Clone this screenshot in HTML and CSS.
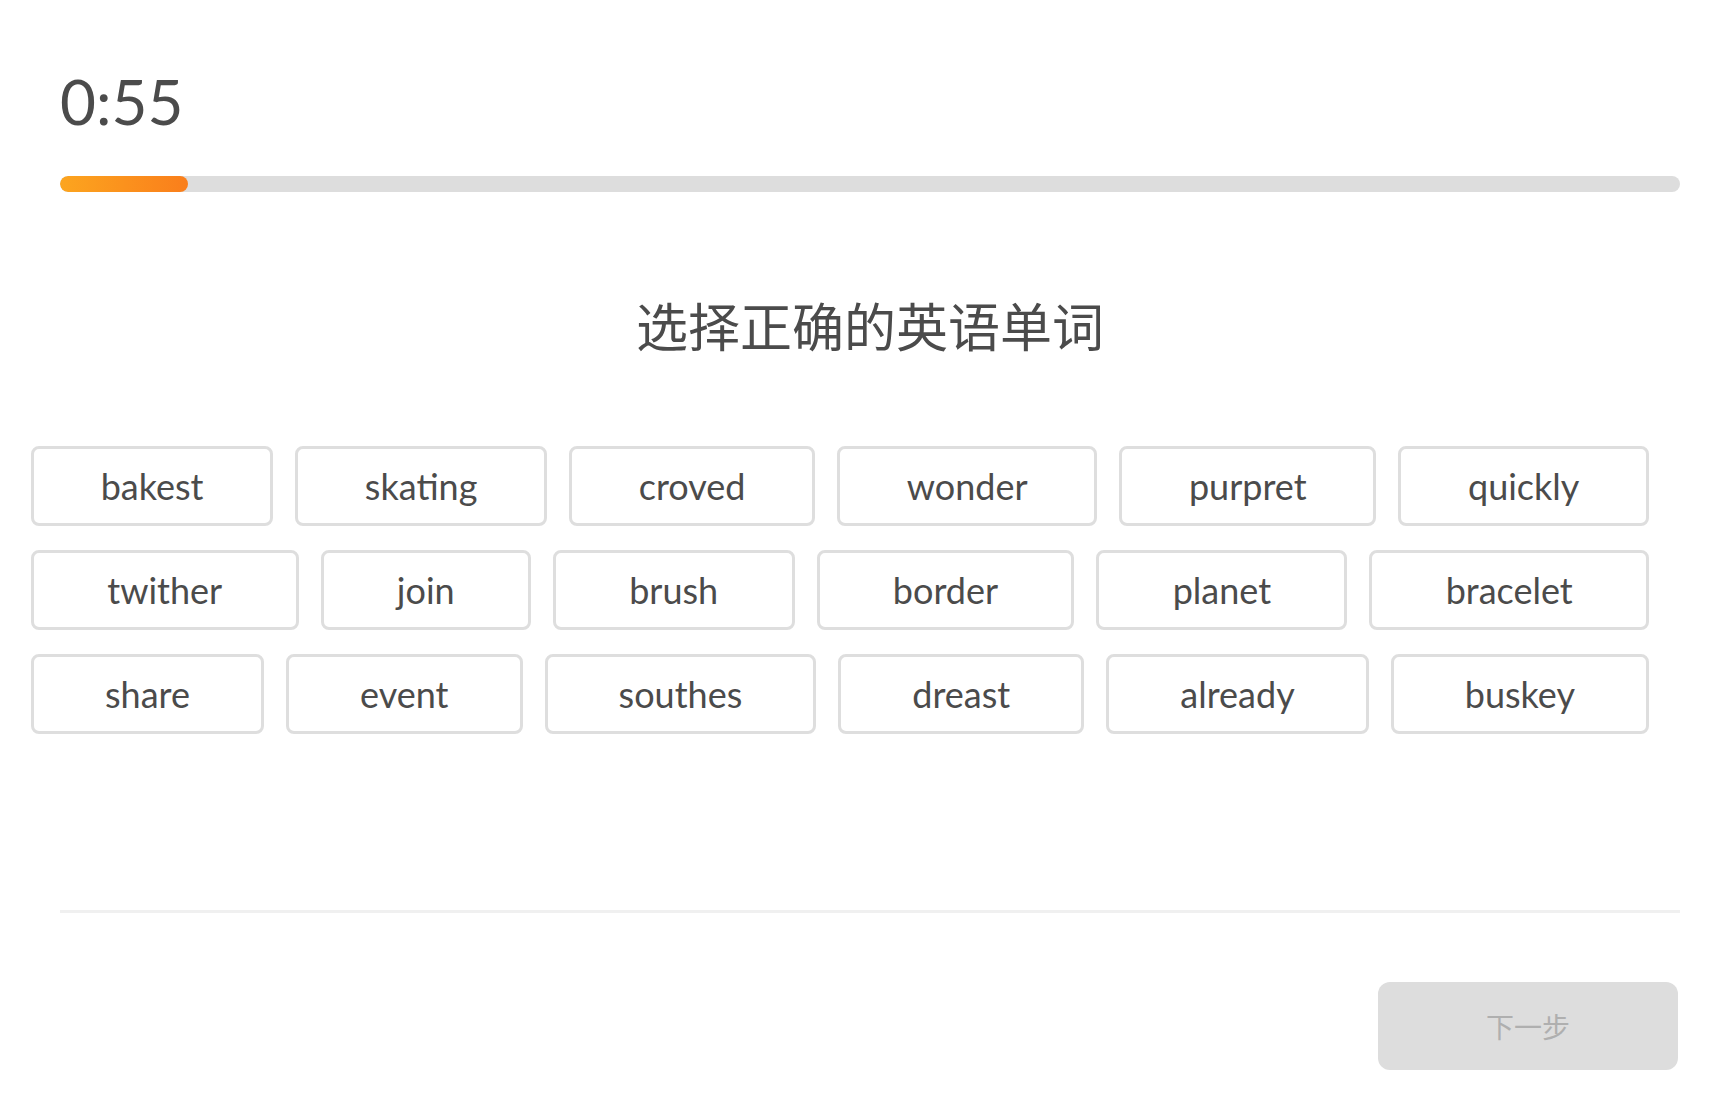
FILE: index.html
```html
<!DOCTYPE html>
<html lang="zh">
<head>
    <meta charset="UTF-8">
    <meta name="viewport" content="width=device-width, initial-scale=1.0">
    <title>选择正确的英语单词</title>
    <link rel="stylesheet" href="styles.css">
</head>
<body>

    <div class="quiz">
        <div class="timer">0:55</div>

        <div class="progress">
            <div class="progress-fill"></div>
        </div>

        <h1 class="prompt">选择正确的英语单词</h1>

        <div class="words">
            <div class="word-row">
                <button class="word">bakest</button>
                <button class="word">skating</button>
                <button class="word">croved</button>
                <button class="word">wonder</button>
                <button class="word">purpret</button>
                <button class="word">quickly</button>
            </div>
            <div class="word-row">
                <button class="word">twither</button>
                <button class="word">join</button>
                <button class="word">brush</button>
                <button class="word">border</button>
                <button class="word">planet</button>
                <button class="word">bracelet</button>
            </div>
            <div class="word-row">
                <button class="word">share</button>
                <button class="word">event</button>
                <button class="word">southes</button>
                <button class="word">dreast</button>
                <button class="word">already</button>
                <button class="word">buskey</button>
            </div>
        </div>

        <div class="footer">
            <button class="next" disabled>下一步</button>
        </div>
    </div>

</body>
</html>
```

FILE: styles.css
```css
* {
    box-sizing: border-box;
}
body {
    margin: 0;
    background-color: #ffffff;
    font-family: Lato, "Noto Sans CJK SC", sans-serif;
    color: #4b4b4b;
}
.quiz {
    padding: 64px 54px 0 60px;
}
.timer {
    font-size: 62px;
    line-height: 74px;
    height: 74px;
}
.progress {
    margin-top: 38px;
    height: 16px;
    background-color: #dddddd;
    border-radius: 8px;
    overflow: hidden;
}
.progress-fill {
    width: 128px;
    height: 100%;
    background: linear-gradient(90deg, #fca51f, #fa7e1b);
    border-radius: 8px;
}
.prompt {
    margin: 107px 0 0;
    font-family: "Noto Sans CJK SC", sans-serif;
    font-size: 52px;
    line-height: 52px;
    font-weight: 400;
    text-align: center;
    color: #4b4b4b;
}
.words {
    margin: 95px 0 0 -29px;
    width: 1618px;
    display: flex;
    flex-direction: column;
    gap: 24px;
}
.word-row {
    display: flex;
    gap: 22px;
}
.word {
    flex: 1 1 auto;
    height: 80px;
    padding: 0 20px;
    background-color: #ffffff;
    border: 3px solid #dedede;
    border-radius: 8px;
    font-family: Lato, sans-serif;
    font-size: 36px;
    color: #4b4b4b;
    cursor: pointer;
}
.footer {
    margin-top: 176px;
    border-top: 3px solid #f0f0f0;
    padding-top: 69px;
    display: flex;
    justify-content: flex-end;
}
.next {
    width: 300px;
    height: 88px;
    border: none;
    border-radius: 12px;
    background-color: #dddddd;
    font-family: "Noto Sans CJK SC", sans-serif;
    font-size: 28px;
    color: #afafaf;
    margin-right: 2px;
}
```
